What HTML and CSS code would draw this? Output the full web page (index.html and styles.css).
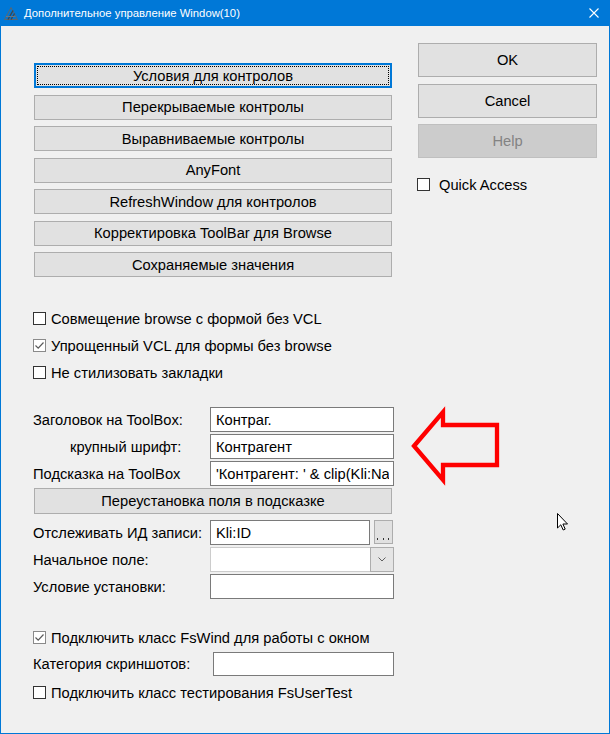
FILE: index.html
```html
<!DOCTYPE html>
<html lang="ru">
<head>
<meta charset="utf-8">
<title>Дополнительное управление Window(10)</title>
<link rel="stylesheet" href="styles.css">
</head>
<body>
<div class="window">
  <div class="titlebar">
    <svg class="title-icon" viewBox="0 0 14 13" width="14" height="13">
      <polygon points="7,0.5 13.5,12.5 0.5,12.5" fill="none" stroke="#5b6670" stroke-width="1"/>
      <line x1="4" y1="12.5" x2="9" y2="3.5" stroke="#3d4650" stroke-width="1.4"/>
      <line x1="7" y1="12.5" x2="10.6" y2="6.5" stroke="#3d4650" stroke-width="1.4"/>
      <line x1="2" y1="9.5" x2="11.5" y2="9.5" stroke="#6b7680" stroke-width="1"/>
    </svg>
    <span class="title">Дополнительное управление Window(10)</span>
    <svg class="close" viewBox="0 0 10 10" width="10" height="10">
      <path d="M0.5 0.5 L9.5 9.5 M9.5 0.5 L0.5 9.5" stroke="#ffffff" stroke-width="1.1" fill="none"/>
    </svg>
  </div>

  <div class="client">
    <div class="left">
      <div class="btn-stack">
        <button class="btn focus">Условия для контролов</button>
        <button class="btn">Перекрываемые контролы</button>
        <button class="btn">Выравниваемые контролы</button>
        <button class="btn">AnyFont</button>
        <button class="btn">RefreshWindow для контролов</button>
        <button class="btn">Корректировка ToolBar для Browse</button>
        <button class="btn">Сохраняемые значения</button>
      </div>

      <div class="checks">
        <div class="chk-row"><span class="box"></span><span>Совмещение browse с формой без VCL</span></div>
        <div class="chk-row"><span class="box on"><svg viewBox="0 0 11 11" width="11" height="11"><polyline points="1.5,5.5 4.2,8.2 9.5,2.5" fill="none" stroke="#5a5a5a" stroke-width="1.2"/></svg></span><span>Упрощенный VCL для формы без browse</span></div>
        <div class="chk-row"><span class="box"></span><span>Не стилизовать закладки</span></div>
      </div>

      <div class="form">
        <div class="frow"><span class="lbl">Заголовок на ToolBox:</span><input class="edit" type="text" value="Контраг." readonly></div>
        <div class="frow gap2"><span class="lbl indent">крупный шрифт:</span><input class="edit" type="text" value="Контрагент" readonly></div>
        <div class="frow gap2"><span class="lbl">Подсказка на ToolBox</span><input class="edit" type="text" value="'Контрагент: ' &amp; clip(Kli:Name)" readonly></div>
        <button class="btn wide">Переустановка поля в подсказке</button>
        <div class="frow gap6"><span class="lbl">Отслеживать ИД записи:</span><input class="edit short" type="text" value="Kli:ID" readonly><button class="ellipsis"><svg viewBox="0 0 17 3" width="17" height="3"><rect x="2" y="1" width="1" height="2" fill="#333"/><rect x="8" y="1" width="1" height="2" fill="#333"/><rect x="13" y="1" width="1" height="2" fill="#333"/></svg></button></div>
        <div class="frow gap2"><span class="lbl">Начальное поле:</span><div class="combo"><span class="combo-btn"><svg viewBox="0 0 8 5" width="8" height="5"><polyline points="0.5,0.5 4,4 7.5,0.5" fill="none" stroke="#606060" stroke-width="1"/></svg></span></div></div>
        <div class="frow gap2"><span class="lbl">Условие установки:</span><input class="edit" type="text" value="" readonly></div>
      </div>

      <div class="bottom">
        <div class="chk-row"><span class="box on"><svg viewBox="0 0 11 11" width="11" height="11"><polyline points="1.5,5.5 4.2,8.2 9.5,2.5" fill="none" stroke="#5a5a5a" stroke-width="1.2"/></svg></span><span>Подключить класс FsWind для работы с окном</span></div>
        <div class="frow cat"><span class="lbl wide-lbl">Категория скриншотов:</span><input class="edit cat-edit" type="text" value="" readonly></div>
        <div class="chk-row last"><span class="box"></span><span>Подключить класс тестирования FsUserTest</span></div>
      </div>
    </div>

    <div class="right">
      <button class="btn rbtn">OK</button>
      <button class="btn rbtn">Cancel</button>
      <button class="btn rbtn disabled">Help</button>
      <div class="chk-row quick"><span class="box"></span><span>Quick Access</span></div>
    </div>
  </div>

  <svg class="arrow" viewBox="405 400 100 92" width="100" height="92">
    <polygon points="414,446 443,412 443,425 497,425 497,465 443,465 443,480" fill="none" stroke="#ff0000" stroke-width="4.3" stroke-linejoin="miter"/>
  </svg>
  <svg class="cursor" viewBox="0 0 12 18" width="12" height="18">
    <path d="M0.5 0.5 L0.5 15 L3.8 11.8 L6.2 17 L8.2 16.1 L5.9 11 L10.5 11 Z" fill="#ffffff" stroke="#000000" stroke-width="1" stroke-linejoin="miter"/>
  </svg>
</div>
</body>
</html>
```

FILE: styles.css
```css
body {
  margin: 0;
  font-family: "Liberation Sans", Arial, sans-serif;
  font-size: 14.7px;
  color: #000;
}

.window {
  position: relative;
  width: 610px;
  height: 734px;
  box-sizing: border-box;
  border: 1px solid #0078d7;
  border-top: 0;
  background: #f0f0f0;
  overflow: hidden;
}

.titlebar {
  height: 26px;
  margin: 0 -1px;
  padding-left: 4px;
  background: #0078d7;
  color: #fff;
  display: flex;
  align-items: center;
}

.title-icon {
  flex: none;
  margin-right: 6px;
  margin-top: 1px;
}

.title {
  flex: 1;
  font-size: 11.3px;
  font-family: "Liberation Sans", Arial, sans-serif;
}

.close {
  flex: none;
  margin-right: 11px;
}

.client {
  display: flex;
  padding-left: 32px;
}

.left {
  width: 361px;
  flex: none;
  padding-top: 37px;
}

.right {
  width: 180px;
  flex: none;
  margin-left: 23px;
  padding-top: 17px;
  display: flex;
  flex-direction: column;
}

.btn {
  font: inherit;
  color: #000;
  background: #e1e1e1;
  border: 1px solid #adadad;
  margin: 0;
  padding: 0;
  height: 25px;
  box-sizing: border-box;
}

.btn-stack {
  display: flex;
  flex-direction: column;
  gap: 6.5px;
  margin-left: 1px;
  width: 358px;
}

.btn.focus {
  border-color: #0078d7;
  box-shadow: inset 0 0 0 1px #0078d7;
  outline: 1px dotted #000;
  outline-offset: -4px;
}

.checks {
  margin-top: 28px;
  display: flex;
  flex-direction: column;
}

.chk-row {
  height: 27px;
  display: flex;
  align-items: center;
  gap: 5px;
}

.box {
  flex: none;
  width: 13px;
  height: 13px;
  box-sizing: border-box;
  border: 1px solid #333;
  background: #fff;
  display: flex;
  align-items: center;
  justify-content: center;
}

.box.on {
  border-color: #8a8a8a;
}

.form {
  margin-top: 21px;
  display: flex;
  flex-direction: column;
}

.frow {
  display: flex;
  align-items: center;
  height: 25px;
}

.gap2 {
  margin-top: 2px;
}

.gap6 {
  margin-top: 6px;
}

.lbl {
  width: 177px;
  flex: none;
  white-space: nowrap;
}

.lbl.indent {
  padding-left: 37px;
  box-sizing: border-box;
}

.edit {
  width: 184px;
  height: 25px;
  box-sizing: border-box;
  border: 1px solid #7a7a7a;
  background: #fff;
  font: inherit;
  color: #000;
  padding: 0 4px 0 5px;
  margin: 0;
  outline: none;
}

.edit.short {
  width: 160px;
}

.ellipsis {
  width: 19px;
  height: 24px;
  margin: 0 0 0 4px;
  padding: 0 0 3px;
  box-sizing: border-box;
  background: #e1e1e1;
  border: 1px solid #adadad;
  display: flex;
  align-items: flex-end;
  justify-content: center;
  align-self: flex-start;
}

.btn.wide {
  width: 358px;
  height: 26px;
  margin: 2px 0 0 1px;
}

.combo {
  width: 184px;
  height: 25px;
  box-sizing: border-box;
  border: 1px solid #cccccc;
  background: #fff;
  display: flex;
  justify-content: flex-end;
}

.combo-btn {
  width: 24px;
  margin: -1px -1px -1px 0;
  box-sizing: border-box;
  border: 1px solid #adadad;
  background: #e5e5e5;
  display: flex;
  align-items: center;
  justify-content: center;
}

.bottom {
  margin-top: 25px;
  display: flex;
  flex-direction: column;
}

.frow.cat {
  height: 24px;
  margin-top: 1px;
}

.lbl.wide-lbl {
  width: 180px;
}

.edit.cat-edit {
  width: 181px;
  height: 24px;
}

.chk-row.last {
  margin-top: 3px;
}

.rbtn {
  width: 179px;
  height: 34px;
  margin-left: 1px;
}

.rbtn + .rbtn {
  margin-top: 6.5px;
}

.rbtn.disabled {
  background: #cccccc;
  border-color: #bfbfbf;
  color: #838383;
}

.chk-row.quick {
  margin-top: 13px;
  gap: 9px;
}

.arrow {
  position: absolute;
  left: 404px;
  top: 400px;
}

.cursor {
  position: absolute;
  left: 556px;
  top: 513px;
}
```
